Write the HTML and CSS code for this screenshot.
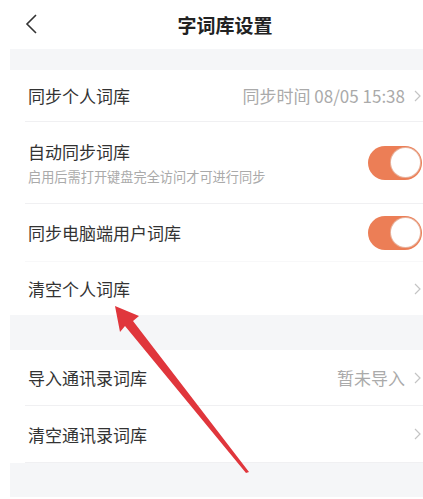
FILE: index.html
```html
<!DOCTYPE html>
<html lang="zh">
<head>
<meta charset="utf-8">
<link rel="stylesheet" href="styles.css">
</head>
<body>
<div class="screen">
  <header class="nav">
    <svg class="back" width="14" height="20" viewBox="0 0 14 20"><path d="M11 1 L2 10 L11 19" fill="none" stroke="#333" stroke-width="1.6"/></svg>
    <h1 class="title">字词库设置</h1>
  </header>
  <div class="gap gap-top"></div>
  <section class="group">
    <div class="row r1">
      <span class="label">同步个人词库</span>
      <span class="value">同步时间 08/05 15:38</span>
      <svg class="chev" width="7" height="12" viewBox="0 0 7 12"><path d="M1 1 L6 6 L1 11" fill="none" stroke="#c4c4c4" stroke-width="1.2"/></svg>
    </div>
    <div class="row r2">
      <div class="stack">
        <span class="label">自动同步词库</span>
        <span class="sub">启用后需打开键盘完全访问才可进行同步</span>
      </div>
      <span class="toggle"><span class="knob"></span></span>
    </div>
    <div class="row r3">
      <span class="label">同步电脑端用户词库</span>
      <span class="toggle"><span class="knob"></span></span>
    </div>
    <div class="row r4 last">
      <span class="label">清空个人词库</span>
      <svg class="chev" width="7" height="12" viewBox="0 0 7 12"><path d="M1 1 L6 6 L1 11" fill="none" stroke="#c4c4c4" stroke-width="1.2"/></svg>
    </div>
  </section>
  <div class="gap gap-mid"></div>
  <section class="group">
    <div class="row r5">
      <span class="label">导入通讯录词库</span>
      <span class="value">暂未导入</span>
      <svg class="chev" width="7" height="12" viewBox="0 0 7 12"><path d="M1 1 L6 6 L1 11" fill="none" stroke="#c4c4c4" stroke-width="1.2"/></svg>
    </div>
    <div class="row r6">
      <span class="label">清空通讯录词库</span>
      <svg class="chev" width="7" height="12" viewBox="0 0 7 12"><path d="M1 1 L6 6 L1 11" fill="none" stroke="#c4c4c4" stroke-width="1.2"/></svg>
    </div>
  </section>
  <div class="gap gap-bottom"></div>
</div>
<svg class="arrow" width="423" height="499" viewBox="0 0 423 499">
  <path d="M115 306 L139 316 L133 321 L249 472 L246 473 L125 326 L120 332 Z" fill="#e0363c"/>
</svg>
</body>
</html>
```
FILE: styles.css
```css
html, body {
  margin: 0;
  padding: 0;
  background: #fff;
  overflow: hidden;
  width: 423px;
  height: 499px;
}
body {
  position: relative;
  font-family: "Noto Sans CJK SC", "Noto Sans", sans-serif;
  color: #333;
}
.screen {
  margin-left: 10px;
  width: 430px;
}
.nav {
  height: 49px;
  display: flex;
  align-items: center;
  justify-content: center;
  position: relative;
}
.back {
  position: absolute;
  left: 15px;
  top: 14px;
}
.title {
  margin: 0;
  font-size: 19px;
  font-weight: 600;
  color: #222;
}
.gap {
  background: #f5f6f8;
}
.gap-top { height: 21px; }
.gap-mid { height: 35px; }
.gap-bottom { height: 34px; }
.group {
  background: #fff;
}
.row {
  display: flex;
  align-items: center;
  margin-left: 15px;
  padding: 0 19px 0 3px;
  border-bottom: 1px solid #f0f0f2;
  box-sizing: border-box;
}
.row.last { border-bottom: none; }
.r1 { height: 52px; }
.r2 { height: 82px; }
.r3 { height: 58px; border-bottom-color: #f8f8f9; }
.r4 { height: 53px; }
.r5 { height: 56px; }
.r6 { height: 57px; }
.label {
  font-size: 17px;
  color: #333;
  flex: 1;
  line-height: 1;
}
.stack {
  flex: 1;
  display: flex;
  flex-direction: column;
  gap: 10px;
  padding-top: 2px;
}
.sub {
  font-size: 13.2px;
  color: #aaa;
  line-height: 1;
}
.value {
  font-size: 17px;
  color: #aaa;
  line-height: 1;
  margin-right: 9px;
}
.chev {
  display: block;
}
.toggle {
  width: 54px;
  height: 34px;
  border-radius: 17px;
  background: #ec7e56;
  display: flex;
  align-items: center;
  justify-content: flex-end;
  padding: 2px;
  box-sizing: border-box;
  position: relative;
  left: 1px;
}
.knob {
  width: 29px;
  height: 29px;
  border-radius: 50%;
  background: #fff;
  box-shadow: 0 0 0 1px #e7b49f;
}
.arrow {
  position: absolute;
  left: 0;
  top: 0;
  pointer-events: none;
}
```
